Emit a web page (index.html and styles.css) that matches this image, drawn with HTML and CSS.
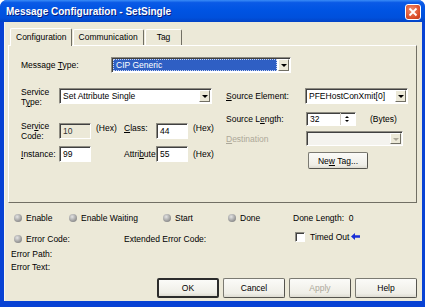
FILE: index.html
```html
<!DOCTYPE html>
<html lang="en">

<head>
    <meta charset="UTF-8">
    <title>Message Configuration - SetSingle</title>
    <link rel="stylesheet" href="styles.css">
</head>

<body>
    <div class="window">
        <div class="titlebar">
            <span class="title">Message Configuration - SetSingle</span>
            <span class="close">
                <svg width="10" height="10" viewBox="0 0 10 10">
                    <path d="M1.5 1.5 L8.5 8.5 M8.5 1.5 L1.5 8.5" stroke="#fff" stroke-width="1.8" />
                </svg>
            </span>
        </div>

        <div class="client">
            <div class="tabs">
                <div class="tab selected">Configuration</div>
                <div class="tab">Communication</div>
                <div class="tab">Tag</div>
            </div>

            <div class="panel">
                <div class="row msg-type">
                    <label class="lbl w90">Message <u>T</u>ype:</label>
                    <div class="select highlighted w180">
                        <span class="value">CIP Generic</span>
                        <span class="drop"></span>
                    </div>
                </div>

                <div class="cols">
                    <div class="col left">
                        <div class="row service-type">
                            <label class="lbl two w38">Service<br>T<u>y</u>pe:</label>
                            <div class="select w153">
                                <span class="value">Set Attribute Single</span>
                                <span class="drop"></span>
                            </div>
                        </div>
                        <div class="row service-code">
                            <label class="lbl two w38 up">Ser<u>v</u>ice<br>Code:</label>
                            <div class="input disabled">10</div>
                            <span class="hex">(Hex)</span>
                            <label class="lbl w32"><u>C</u>lass:</label>
                            <div class="input">44</div>
                            <span class="hex">(Hex)</span>
                        </div>
                        <div class="row instance">
                            <label class="lbl w38"><u>I</u>nstance:</label>
                            <div class="input">99</div>
                            <span class="hex"></span>
                            <label class="lbl w32">Attri<u>b</u>ute:</label>
                            <div class="input">55</div>
                            <span class="hex">(Hex)</span>
                        </div>
                    </div>

                    <div class="col right">
                        <div class="row source-el">
                            <label class="lbl w79"><u>S</u>ource Element:</label>
                            <div class="select w103">
                                <span class="value">PFEHostConXmit[0]</span>
                                <span class="drop"></span>
                            </div>
                        </div>
                        <div class="row source-len">
                            <label class="lbl w80">Source L<u>e</u>ngth:</label>
                            <div class="spin">
                                <span class="value">32</span>
                                <span class="arrows">
                                    <span class="up-arrow"></span>
                                    <span class="down-arrow"></span>
                                </span>
                            </div>
                            <span class="bytes">(Bytes)</span>
                        </div>
                        <div class="row dest">
                            <label class="lbl w80 dim"><u>D</u>estination</label>
                            <div class="select w97 off">
                                <span class="value"></span>
                                <span class="drop"></span>
                            </div>
                        </div>
                        <div class="row newtag">
                            <button class="btn small">Ne<u>w</u> Tag...</button>
                        </div>
                    </div>
                </div>
            </div>

            <div class="status">
                <span class="led-item w55"><span class="led"></span>Enable</span>
                <span class="led-item w94"><span class="led"></span>Enable Waiting</span>
                <span class="led-item w65"><span class="led"></span>Start</span>
                <span class="led-item w65"><span class="led"></span>Done</span>
                <span class="done-len">Done Length:&nbsp; 0</span>
            </div>

            <div class="errors">
                <span class="led-item w110"><span class="led"></span>Error Code:</span>
                <span class="ext">Extended Error Code:</span>
                <span class="timed">
                    <span class="check"></span>Timed Out
                    <svg width="9" height="7" viewBox="0 0 9 7">
                        <path d="M0 3.5 L4 0 L4 2.3 L9 2.3 L9 4.7 L4 4.7 L4 7 Z" fill="#1a2fd6" />
                    </svg>
                </span>
            </div>
            <div class="err-line first">Error Path:</div>
            <div class="err-line">Error Text:</div>

            <div class="buttons">
                <button class="btn default">OK</button>
                <button class="btn">Cancel</button>
                <button class="btn" disabled>Apply</button>
                <button class="btn">Help</button>
            </div>
        </div>
    </div>
</body>

</html>
```

FILE: styles.css
```css
* {
    box-sizing: border-box;
}

body {
    margin: 0;
    font-family: 'Liberation Sans', Arial, sans-serif;
    font-size: 8.5px;
    color: #000;
    background: #fff;
}

.window {
    width: 425px;
    height: 307px;
    background: #0842d4;
    border-radius: 7px 7px 0 0;
    display: flex;
    flex-direction: column;
    overflow: hidden;
}

.titlebar {
    height: 22px;
    flex: none;
    display: flex;
    align-items: center;
    justify-content: space-between;
    padding: 0 4px 0 6px;
    background: linear-gradient(#3a8cf7 0%, #0a5ae6 12%, #0054e3 45%, #0050dc 80%, #0343c6 100%);
}

.title {
    color: #fff;
    font-weight: bold;
    font-size: 10px;
    text-shadow: 1px 1px 0 #0a1f7d;
    margin-top: 1px;
}

.close {
    width: 16px;
    height: 16px;
    border: 1px solid #fff;
    border-radius: 3px;
    background: radial-gradient(circle at 40% 35%, #f08c6e, #d94a25 70%, #b8381b);
    display: flex;
    align-items: center;
    justify-content: center;
    margin-top: 1px;
}

.client {
    flex: 1;
    margin: 0 3px 6px 4px;
    background: #ece9d8;
    padding: 5px 5px 0 3px;
    border-left: 1px solid #f6f5ee;
}

/* tabs */
.tabs {
    display: flex;
    height: 18px;
    padding-left: 2px;
    align-items: flex-end;
    position: relative;
    z-index: 1;
}

.tab {
    height: 16px;
    padding: 0 5px;
    line-height: 15px;
    border: 1px solid #fff;
    border-right-color: #716f64;
    border-bottom: none;
    border-radius: 2px 2px 0 0;
    background: #ece9d8;
    margin-right: 1px;
}

.tab.selected {
    height: 18px;
    padding: 0 4px 0 5px;
    line-height: 17px;
    margin-bottom: -1px;
}

.tab:nth-child(3) {
    padding: 0 11px;
}

.panel {
    height: 158px;
    border: 1px solid #fff;
    border-right-color: #716f64;
    border-bottom-color: #716f64;
    padding: 11px 0 0 12px;
}

/* generic rows */
.row {
    display: flex;
    align-items: center;
}

.lbl {
    flex: none;
    line-height: 10px;
}

.lbl.dim {
    color: #aca899;
}

.lbl u {
    text-decoration: underline;
}

.w32 { width: 32px; }
.w38 { width: 38px; }
.w55 { width: 55px; }
.w65 { width: 65px; }
.w79 { width: 79px; }
.w80 { width: 80px; }
.w90 { width: 90px; }
.w94 { width: 94px; }
.w97 { width: 97px; }
.w103 { width: 103px; }
.w110 { width: 110px; }
.w153 { width: 153px; }
.w180 { width: 180px; }

/* selects */
.select {
    height: 16px;
    flex: none;
    display: flex;
    align-items: stretch;
    background: #fff;
    border: 1px solid;
    border-color: #8e8c82 #fff #fff #8e8c82;
    box-shadow: inset 1px 1px 0 #404040;
}

.select .value {
    flex: 1;
    padding-left: 3px;
    line-height: 14px;
    white-space: nowrap;
    overflow: hidden;
}

.select.highlighted .value {
    background: #2f5fc4;
    color: #fff;
    margin: 1px 1px 1px 1px;
    line-height: 12px;
    outline: 1px dotted #c9d6f2;
    outline-offset: -1px;
}

.drop {
    width: 11px;
    flex: none;
    margin: 1px 1px 1px 0;
    background: #ece9d8;
    border: 1px solid;
    border-color: #fff #716f64 #716f64 #fff;
    position: relative;
}

.drop::after {
    content: '';
    position: absolute;
    left: 2px;
    top: 4px;
    border-left: 3px solid transparent;
    border-right: 3px solid transparent;
    border-top: 3px solid #000;
}

.select.off {
    background: #f4f3ee;
    height: 15px;
}

.select.off .drop::after {
    border-top-color: #aca899;
}

/* text inputs */
.input {
    width: 32px;
    height: 16px;
    flex: none;
    background: #fff;
    border: 1px solid;
    border-color: #8e8c82 #fff #fff #8e8c82;
    box-shadow: inset 1px 1px 0 #404040;
    padding-left: 3px;
    line-height: 14px;
}

.input.disabled {
    background: #ece9d8;
    color: #333;
}

.hex {
    width: 33px;
    flex: none;
    padding-left: 5px;
}

/* two-column area */
.cols {
    display: flex;
    margin-top: 14px;
}

.col.left {
    width: 205px;
}

.col.right {
    flex: 1;
}

.service-type {
    height: 17px;
    align-items: flex-start;
}

.service-type .select {
    margin-top: 1px;
}

.service-code {
    margin-top: 19px;
    align-items: flex-start;
}

.lbl.up {
    margin-top: -2px;
}

.instance {
    margin-top: 5px;
}

.source-el {
    height: 17px;
}

.source-len {
    margin-top: 8px;
}

.spin {
    width: 50px;
    height: 14px;
    flex: none;
    display: flex;
    background: #fff;
    border: 1px solid;
    border-color: #8e8c82 #fff #fff #8e8c82;
    box-shadow: inset 1px 1px 0 #404040;
}

.spin .value {
    flex: 1;
    padding-left: 3px;
    line-height: 12px;
}

.arrows {
    width: 12px;
    display: flex;
    flex-direction: column;
    align-items: center;
    justify-content: center;
    gap: 2px;
    border-left: 1px solid #d4d0c8;
    margin-right: 3px;
}

.up-arrow {
    border-left: 2px solid transparent;
    border-right: 2px solid transparent;
    border-bottom: 2px solid #000;
}

.down-arrow {
    border-left: 2px solid transparent;
    border-right: 2px solid transparent;
    border-top: 2px solid #000;
}

.bytes {
    padding-left: 14px;
}

.dest {
    margin-top: 5px;
}

.newtag {
    margin-top: 6px;
    padding-left: 82px;
}

/* buttons */
.btn {
    font-family: inherit;
    font-size: 8.5px;
    color: #000;
    height: 20px;
    width: 62px;
    background: linear-gradient(#fbfbf8, #efeee7 80%, #dedcd2);
    border: 1px solid #7b7a72;
    border-right-color: #55544e;
    border-bottom-color: #55544e;
    border-radius: 2px;
    padding: 0;
}

.btn.small {
    width: 60px;
    height: 17px;
}

.btn.default {
    border: 2px solid #2c2c2c;
}

.btn:disabled {
    color: #aca899;
}

/* status */
.status {
    display: flex;
    align-items: center;
    height: 12px;
    margin-top: 9px;
    padding-left: 6px;
}

.led-item {
    display: flex;
    align-items: center;
    flex: none;
}

.led {
    width: 8px;
    height: 8px;
    border-radius: 50%;
    background: radial-gradient(circle at 40% 35%, #e4e4e4, #9c9c9c 60%, #6e6e6e);
    margin-right: 4px;
}

.errors {
    display: flex;
    align-items: center;
    height: 12px;
    margin-top: 9px;
    padding-left: 6px;
}

.ext {
    width: 171px;
    flex: none;
}

.timed {
    display: flex;
    align-items: center;
    gap: 2px;
    margin-top: -5px;
}

.check {
    width: 10px;
    height: 10px;
    background: #fff;
    border: 1px solid;
    border-color: #8e8c82 #fff #fff #8e8c82;
    box-shadow: inset 1px 1px 0 #404040;
    margin-right: 3px;
}

.err-line {
    height: 12px;
    line-height: 12px;
    padding-left: 3px;
    margin-top: 1px;
}

.err-line.first {
    margin-top: 3px;
}

.buttons {
    display: flex;
    justify-content: flex-end;
    gap: 4px;
    margin-top: 5px;
    padding-right: 0;
}
```
